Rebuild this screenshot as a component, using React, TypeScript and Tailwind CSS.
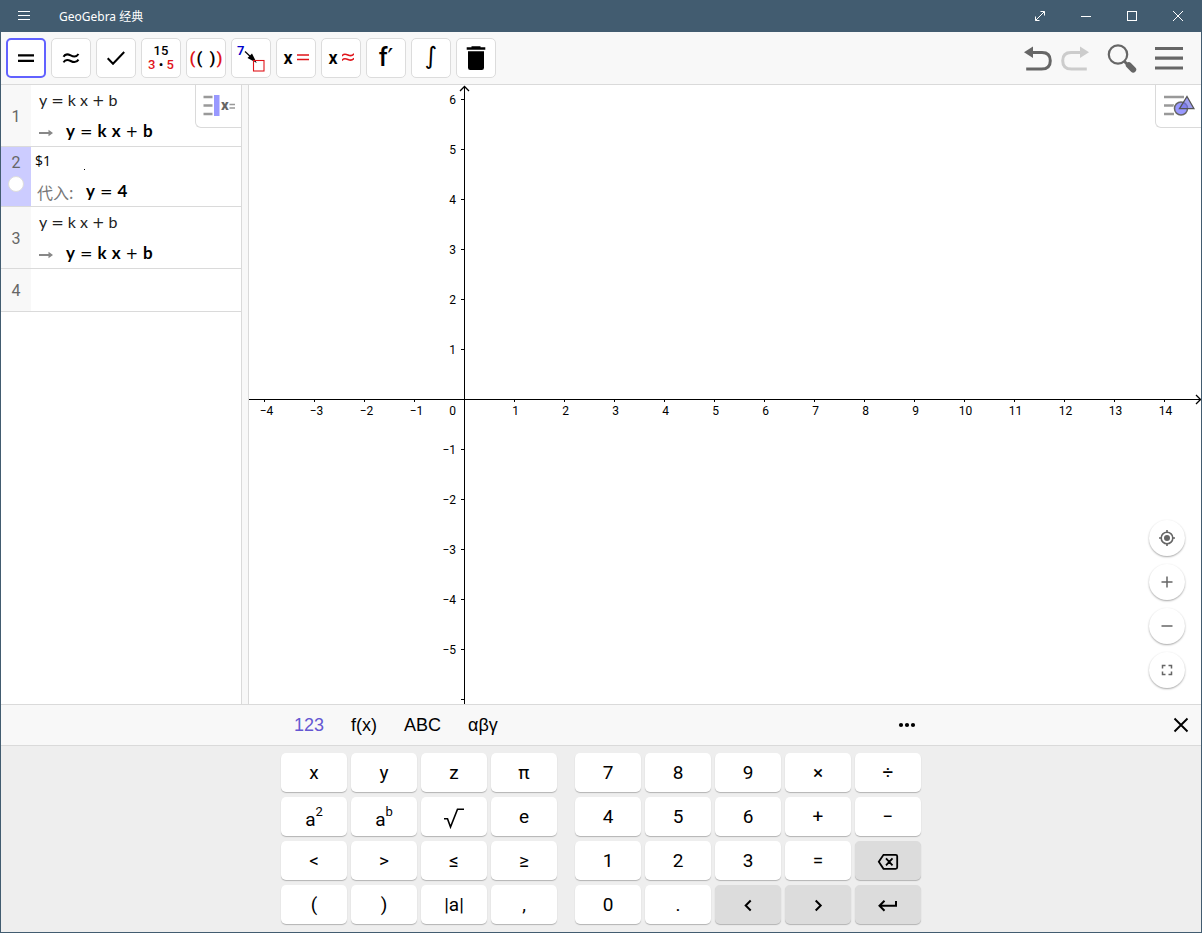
import { useState } from 'react';
import type { ReactNode } from 'react';

const UNIT = 50;
const ORIGIN = { x: 215, y: 314 };

const strip = 'flex items-center justify-center';

function EqualsIcon() {
  return (
    <svg className="w-9 h-9" viewBox="0 0 36 36" stroke="#000" strokeWidth="2.2">
      <path d="M10 15.4h16M10 20.8h16" />
    </svg>
  );
}

function ApproxIcon() {
  return (
    <svg className="w-9 h-9" viewBox="0 0 36 36" fill="none" stroke="#000" strokeWidth="2">
      <path d="M10.5 16.8c1.5-2.8 4-3 7.2-1.4s6 1.4 7.8-1.4M10.5 22.4c1.5-2.8 4-3 7.2-1.4s6 1.4 7.8-1.4" />
    </svg>
  );
}

function CheckIcon() {
  return (
    <svg className="w-9 h-9" viewBox="0 0 36 36" fill="none" stroke="#000" strokeWidth="2">
      <path d="M9.7 18.3l5.3 5.4L26.2 12" />
    </svg>
  );
}

function FactorIcon() {
  return (
    <span className="flex flex-col items-center text-[13px] leading-[14px] font-medium">
      <span>15</span>
      <span className="text-[#e0141a]">
        3 <span className="text-black">•</span> 5
      </span>
    </span>
  );
}

function ExpandIcon() {
  return (
    <span className="flex gap-px text-[17px] leading-5 font-semibold">
      <span className="text-[#e0141a]">(</span>
      <span>(</span>
      <span className="ml-[6px]">)</span>
      <span className="text-[#e0141a]">)</span>
    </span>
  );
}

function SubstituteIcon() {
  return (
    <svg className="w-9 h-9" viewBox="0 0 36 36">
      <text x="4" y="15" fontSize="13" fontWeight="600" fill="#0000cc">7</text>
      <path d="M12 11.500l7 6.500" stroke="#000" strokeWidth="1.200" />
      <path d="M14.500 18l4.500-4.500 4.700 9.500z" />
      <rect x="20.500" y="20.500" width="10.500" height="10.500" fill="none" stroke="#e0141a" strokeWidth="1.100" />
    </svg>
  );
}

function SolveIcon({ numeric = false }: { numeric?: boolean }) {
  return (
    <span className="flex items-center gap-1">
      <span className="text-[18px] leading-5 font-semibold">x</span>
      <svg className="w-3 h-3" viewBox="0 0 12 12" fill="none" stroke="#e0141a" strokeWidth="1.500">
        {numeric ? (
          <path d="M0 4c1.500-2.500 3.200-2.200 6-1s4.500 1 6-1.300M0 8.500c1.500-2.500 3.200-2.200 6-1s4.500 1 6-1.300" />
        ) : (
          <path d="M0 3h12M0 7.500h12" />
        )}
      </svg>
    </span>
  );
}

function TrashIcon() {
  return (
    <svg className="w-9 h-9" viewBox="0 0 36 36">
      <path d="M13.500 6.200h9v1h4.800v2.500H8.700V7.200h4.800zM10 11.200h16v16.600a2.200 2.200 0 0 1-2.200 2.200H12.200a2.200 2.200 0 0 1-2.200-2.200z" />
    </svg>
  );
}

const tools: { label: string; icon: ReactNode }[] = [
  { label: '精确计算', icon: <EqualsIcon /> },
  { label: '数值计算', icon: <ApproxIcon /> },
  { label: '保留输入', icon: <CheckIcon /> },
  { label: '因式分解', icon: <FactorIcon /> },
  { label: '展开', icon: <ExpandIcon /> },
  { label: '代入', icon: <SubstituteIcon /> },
  { label: '精确解', icon: <SolveIcon /> },
  { label: '数值解', icon: <SolveIcon numeric /> },
  {
    label: '导数',
    icon: (
      <span className="text-[25px] leading-6 font-medium">
        f<span className="font-['DejaVu_Sans',sans-serif]">′</span>
      </span>
    ),
  },
  {
    label: '积分',
    icon: <span className="font-['DejaVu_Sans',sans-serif] text-[24px] leading-6 -mt-1">∫</span>,
  },
  { label: '删除', icon: <TrashIcon /> },
];

function TitleBar() {
  return (
    <header className="h-8 bg-[#425c70] text-white flex items-center justify-between shrink-0">
      <div className="flex items-center">
        <button aria-label="菜单" className={`${strip} w-[46px] h-8`}>
          <svg className="w-3 h-3" viewBox="0 0 12 12" stroke="#fff" shapeRendering="crispEdges">
            <path d="M0 1.500h12M0 5.500h12M0 9.500h12" />
          </svg>
        </button>
        <h1 className="ml-3 pt-0.5 font-['Noto_Sans','Noto_Sans_CJK_SC',sans-serif] text-[12px] leading-4">
          GeoGebra 经典
        </h1>
      </div>
      <div className="flex">
        <button aria-label="全屏" className={`${strip} w-[46px] h-8`}>
          <svg className="w-3 h-3" viewBox="0 0 12 12" fill="none" stroke="#fff">
            <path d="M1.500 10.500l9-9M6.500 1.500h4v4M1.500 6.500v4h4" />
          </svg>
        </button>
        <button aria-label="最小化" className={`${strip} w-[46px] h-8`}>
          <svg className="w-[10px] h-[10px]" viewBox="0 0 10 10" stroke="#fff">
            <path d="M0 5.500h10" />
          </svg>
        </button>
        <button aria-label="最大化" className={`${strip} w-[46px] h-8`}>
          <svg className="w-[10px] h-[10px]" viewBox="0 0 10 10" fill="none" stroke="#fff">
            <rect x="0.500" y="0.500" width="9" height="9" />
          </svg>
        </button>
        <button aria-label="关闭" className={`${strip} w-[46px] h-8`}>
          <svg className="w-[10px] h-[10px]" viewBox="0 0 10 10" stroke="#fff">
            <path d="M0 0l10 10M10 0L0 10" />
          </svg>
        </button>
      </div>
    </header>
  );
}

function UndoIcon({ color, flip = false }: { color: string; flip?: boolean }) {
  return (
    <svg className="w-7 h-7" viewBox="0 0 28 28">
      <g transform={flip ? 'matrix(-1 0 0 1 28 0)' : undefined}>
        <path d="M0 8.300L9 2.500v11.500z" fill={color} />
        <path d="M8 8.500h10c5.500 0 8.300 3 8.300 8.200S23.500 25 17.500 25H2.200" fill="none" stroke={color} strokeWidth="3" />
      </g>
    </svg>
  );
}

function Toolbar() {
  const [active, setActive] = useState(0);

  return (
    <div className="h-[53px] bg-[#f8f8f8] border-b border-[#dadada] px-[5px] flex items-center justify-between shrink-0">
      <div className="flex gap-[5px]">
        {tools.map((tool, index) => (
          <button
            key={tool.label}
            aria-label={tool.label}
            onClick={() => setActive(index)}
            className={`${strip} w-10 h-10 bg-white rounded-[5px] overflow-hidden ${
              index === active ? 'border-2 border-[#6161ff]' : 'border border-[#dcdcdc]'
            }`}
          >
            {tool.icon}
          </button>
        ))}
      </div>
      <div className="flex items-center pr-[13px]">
        <button aria-label="撤销">
          <UndoIcon color="#666" />
        </button>
        <button aria-label="重做" className="ml-[9px]">
          <UndoIcon color="#ccc" flip />
        </button>
        <button aria-label="搜索" className="ml-[18px]">
          <svg className="w-[30px] h-[30px]" viewBox="0 0 30 30" fill="none" stroke="#666">
            <circle cx="11" cy="11.500" r="9.200" strokeWidth="2.200" />
            <path d="M17.500 18.500l4 4" strokeWidth="2.800" />
            <path d="M21.800 22.200l4.400 4.400" strokeWidth="6" strokeLinecap="round" />
          </svg>
        </button>
        <button aria-label="主菜单" className="ml-[18px]">
          <svg className="w-7 h-7" viewBox="0 0 28 28" stroke="#666" strokeWidth="3.200">
            <path d="M0 4.500h28M0 14.200h28M0 24h28" />
          </svg>
        </button>
      </div>
    </div>
  );
}

interface CasRow {
  id: number;
  input?: string;
  output?: string;
  note?: string;
  selected?: boolean;
}

const casRows: CasRow[] = [
  { id: 1, input: 'y = k x + b', output: 'y = k x + b' },
  { id: 2, input: '$1', output: 'y = 4', note: '代入:', selected: true },
  { id: 3, input: 'y = k x + b', output: 'y = k x + b' },
  { id: 4 },
];

// Operators are set in a wider face than the letters around them.
function Formula({ text, bold = false }: { text: string; bold?: boolean }) {
  return (
    <span
      className={`flex items-baseline font-['Lato',sans-serif] leading-6 ${
        bold ? 'gap-[5px] text-[17px] font-bold text-black' : 'gap-1 text-[16px] text-[#222]'
      }`}
    >
      {text.split(' ').map((part, i) => (
        <span
          key={i}
          className={/[=+]/.test(part) ? "font-['DejaVu_Sans',sans-serif] text-[15px] leading-6 font-normal" : ''}
        >
          {part}
        </span>
      ))}
    </span>
  );
}

function CasPanel() {
  return (
    <section className="relative w-[241px] shrink-0 border-r border-[#dadada] bg-white">
      {casRows.map((row) => (
        <div key={row.id} className="flex border-b border-[#dadada]">
          <div
            className={`w-[30px] shrink-0 flex flex-col items-center text-[16px] leading-5 text-[#666] ${
              row.selected ? 'bg-[#ccccff] pt-[6px]' : 'bg-[#f8f8f8] justify-center pt-0.5'
            }`}
          >
            {row.id}
            {row.selected && (
              <button aria-label="显示" className="w-4 h-4 mt-[3px] rounded-full bg-white border border-[#ddd]" />
            )}
          </div>
          {row.input ? (
            <div className={row.selected ? 'flex-1 pl-1 h-[59px]' : 'flex-1 pl-2 h-[61px]'}>
              <div className="h-[30px] flex items-center">
                {row.selected ? (
                  <span className="font-['Open_Sans',sans-serif] text-[14px] leading-5 pb-0.5">{row.input}</span>
                ) : (
                  <Formula text={row.input} />
                )}
                {row.selected && <span className="ml-[33px] mt-3.5 w-px h-px bg-black" />}
              </div>
              <div className={`flex items-center ${row.selected ? 'h-[29px]' : 'h-8'}`}>
                {row.note ? (
                  <span className="w-[51px] pl-0.5 font-['Noto_Sans_CJK_SC',sans-serif] text-[16px] leading-6 text-[#777]">
                    {row.note}
                  </span>
                ) : (
                  <svg className="w-[27px] h-2 mt-1" viewBox="0 0 27 8">
                    <path d="M0 3h9.500V0.800L14 4l-4.500 3.200V5H0z" fill="#888" />
                  </svg>
                )}
                <Formula text={row.output ?? ''} bold />
              </div>
            </div>
          ) : (
            <div className="flex-1 h-[42px]" />
          )}
        </div>
      ))}
      <button
        aria-label="运算区样式"
        className={`${strip} absolute top-0 right-0 w-[46px] h-[43px] bg-white border-l border-b border-[#dadada] rounded-bl-md`}
      >
        <svg className="w-8 h-6" viewBox="0 0 32 24">
          <path d="M0.500 3h9M0.500 11.500h9M0.500 20h9" stroke="#999" strokeWidth="2.600" />
          <rect x="11" y="1" width="5.500" height="21" fill="#9999ff" />
          <text x="18" y="16" fontSize="15" fontWeight="800" fill="#666">x</text>
          <path d="M26.500 10.500h5.500M26.500 14h5.500" stroke="#999" strokeWidth="1.400" />
        </svg>
      </button>
    </section>
  );
}

const xTicks = Array.from({ length: 19 }, (_, i) => i - 4);
const yTicks = Array.from({ length: 13 }, (_, i) => i - 6);

const tickLabel = (n: number) => (n < 0 ? `−${-n}` : `${n}`);

function Axes() {
  return (
    <svg className="absolute inset-0 w-full h-full" fontSize="12" shapeRendering="crispEdges">
      <g stroke="#000">
        <line x1="0" x2="100%" y1={ORIGIN.y + 0.5} y2={ORIGIN.y + 0.5} />
        <line x1={ORIGIN.x + 0.5} x2={ORIGIN.x + 0.5} y1="2" y2="100%" />
      </g>
      <path
        d={`M${ORIGIN.x - 4} 6l4.500-4.500 4.500 4.500`}
        fill="none"
        stroke="#000"
        strokeWidth="1.300"
        shapeRendering="auto"
      />
      <svg x="100%" y={ORIGIN.y} overflow="visible" shapeRendering="auto">
        <path d="M-5-4l4.500 4.500-4.500 4.500" fill="none" stroke="#000" strokeWidth="1.300" />
      </svg>
      {xTicks
        .filter((n) => n !== 0)
        .map((n) => {
          const x = ORIGIN.x + n * UNIT + 0.5;
          return (
            <g key={n}>
              <line x1={x} x2={x} y1={ORIGIN.y} y2={ORIGIN.y + 3} stroke="#000" />
              <text x={n < 0 ? x + 2 : x + 1} y={ORIGIN.y + 16} textAnchor="middle">
                {tickLabel(n)}
              </text>
            </g>
          );
        })}
      {yTicks
        .filter((n) => n !== 0)
        .map((n) => {
          const y = ORIGIN.y - n * UNIT + 0.5;
          return (
            <g key={n}>
              <line x1={ORIGIN.x - 3} x2={ORIGIN.x} y1={y} y2={y} stroke="#000" />
              {n > -6 && (
                <text x={ORIGIN.x - 8} y={y + 4} textAnchor="end">
                  {tickLabel(n)}
                </text>
              )}
            </g>
          );
        })}
      <text x={ORIGIN.x - 8} y={ORIGIN.y + 16} textAnchor="end">0</text>
    </svg>
  );
}

const zoomButtons: { label: string; icon: ReactNode }[] = [
  {
    label: '标准视图',
    icon: (
      <>
        <circle cx="9" cy="9" r="5.800" strokeWidth="1.600" />
        <circle cx="9" cy="9" r="3" fill="#666" stroke="none" />
        <path d="M9 1v3M9 14v3M1 9h3M14 9h3" strokeWidth="1.600" />
      </>
    ),
  },
  { label: '放大', icon: <path d="M3.500 9h11M9 3.500v11" strokeWidth="1.500" /> },
  { label: '缩小', icon: <path d="M3.500 9h11" strokeWidth="1.500" /> },
  {
    label: '全屏视图',
    icon: <path d="M4.500 7.500v-3h3M10.500 4.500h3v3M13.500 10.500v3h-3M7.500 13.500h-3v-3" strokeWidth="1.500" />,
  },
];

function GraphicsView() {
  return (
    <section className="relative flex-1 min-w-0 overflow-hidden bg-white">
      <Axes />
      <button
        aria-label="绘图区样式"
        className={`${strip} absolute top-0 right-0 w-[46px] h-[43px] bg-white border-l border-b border-[#dadada] rounded-bl-md`}
      >
        <svg className="w-8 h-6" viewBox="0 0 32 24">
          <path d="M1 3h20M1 11.500h10M1 20h10" stroke="#999" strokeWidth="2.400" />
          <circle cx="18" cy="14.500" r="8" fill="#fff" />
          <circle cx="18" cy="14.500" r="6.500" fill="#9999ff" stroke="#666" strokeWidth="1.500" />
          <path d="M24 2.500l7 12.200H16.500z" fill="#7575e8" fillOpacity="0.700" stroke="#555" strokeWidth="1.300" />
        </svg>
      </button>
      <div className="absolute right-4 bottom-4 flex flex-col gap-2">
        {zoomButtons.map((button) => (
          <button
            key={button.label}
            aria-label={button.label}
            className={`${strip} w-9 h-9 rounded-full bg-white shadow-[0_1px_2px_rgba(0,0,0,0.350)]`}
          >
            <svg className="w-[18px] h-[18px]" viewBox="0 0 18 18" fill="none" stroke="#666">
              {button.icon}
            </svg>
          </button>
        ))}
      </div>
    </section>
  );
}

interface KeyDef {
  label: string;
  face?: ReactNode;
  dark?: boolean;
}

const symbolKeys: KeyDef[] = [
  { label: 'x' },
  { label: 'y' },
  { label: 'z' },
  { label: 'π' },
  { label: 'a2', face: <Power exponent="2" /> },
  { label: 'ab', face: <Power exponent="b" /> },
  {
    label: '平方根',
    face: (
      <svg className="w-6 h-6" viewBox="0 0 24 24" fill="none" stroke="#000" strokeWidth="1.600">
        <path d="M2 13.800h3.500l3 8.200L15.500 4.200H22" />
      </svg>
    ),
  },
  { label: 'e' },
  { label: '<' },
  { label: '>' },
  { label: '≤' },
  { label: '≥' },
  { label: '(' },
  { label: ')' },
  { label: '|a|' },
  { label: ',' },
];

const numberKeys: KeyDef[] = [
  { label: '7' },
  { label: '8' },
  { label: '9' },
  { label: '×' },
  { label: '÷' },
  { label: '4' },
  { label: '5' },
  { label: '6' },
  { label: '+' },
  { label: '−' },
  { label: '1' },
  { label: '2' },
  { label: '3' },
  { label: '=' },
  {
    label: '退格',
    dark: true,
    face: (
      <svg className="w-6 h-6" viewBox="0 0 24 24" fill="none" stroke="#000" strokeWidth="1.800">
        <path d="M7.500 5.800h12.200a1.500 1.500 0 0 1 1.500 1.500v11a1.500 1.500 0 0 1-1.500 1.500H7.500L2.800 12.800zM10 9.300l6.500 7M16.500 9.300l-6.500 7" />
      </svg>
    ),
  },
  { label: '0' },
  { label: '.' },
  {
    label: '左移',
    dark: true,
    face: (
      <svg className="w-6 h-6" viewBox="0 0 24 24" fill="none" stroke="#000" strokeWidth="2">
        <path d="M14.700 7.500L9.700 12.500l5 5" />
      </svg>
    ),
  },
  {
    label: '右移',
    dark: true,
    face: (
      <svg className="w-6 h-6" viewBox="0 0 24 24" fill="none" stroke="#000" strokeWidth="2">
        <path d="M9.700 7.500l5 5-5 5" />
      </svg>
    ),
  },
  {
    label: '回车',
    dark: true,
    face: (
      <svg className="w-6 h-6" viewBox="0 0 24 24" fill="none" stroke="#000" strokeWidth="2">
        <path d="M20 8v4.800H4M8.500 7.800l-5 5 5 5" />
      </svg>
    ),
  },
];

function Power({ exponent }: { exponent: string }) {
  return (
    <span className="flex pt-1.5">
      a<span className="-mt-2 text-[13px] font-normal">{exponent}</span>
    </span>
  );
}

function KeyGrid({ keys, className }: { keys: KeyDef[]; className: string }) {
  return (
    <div className={`grid gap-x-1 gap-y-[5px] ${className}`}>
      {keys.map((key) => (
        <button
          key={key.label}
          aria-label={key.label}
          className={`${strip} h-[39px] rounded-[5px] text-[19px] leading-6 text-black shadow-[0_1px_1px_rgba(0,0,0,0.250)] ${
            key.dark ? 'bg-[#dcdcdc]' : 'bg-white'
          }`}
        >
          {key.face ?? key.label}
        </button>
      ))}
    </div>
  );
}

function Keyboard() {
  const [tab, setTab] = useState('123');

  return (
    <section className="shrink-0 bg-[#eeeeee]">
      <div className="relative h-[42px] bg-[#f8f8f8] border-y border-[#dadada] flex items-center justify-center">
        <div className="w-[640px] flex items-center justify-between">
          <div className="flex gap-px font-['Liberation_Sans',sans-serif] text-[18px]">
            {['123', 'f(x)', 'ABC', 'αβγ'].map((name) => (
              <button
                key={name}
                onClick={() => setTab(name)}
                className={`px-[13px] ${tab === name ? 'text-[#6557d2]' : 'text-black'}`}
              >
                {name}
              </button>
            ))}
          </div>
          <button aria-label="更多" className="mr-[5px]">
            <svg className="w-[18px] h-[18px]" viewBox="0 0 18 18">
              <circle cx="3" cy="9" r="2.100" />
              <circle cx="9" cy="9" r="2.100" />
              <circle cx="15" cy="9" r="2.100" />
            </svg>
          </button>
        </div>
        <button aria-label="关闭键盘" className="absolute right-3 top-3">
          <svg className="w-4 h-4" viewBox="0 0 16 16" stroke="#000" strokeWidth="1.900">
            <path d="M1.500 1.500l13 13M14.500 1.500l-13 13" />
          </svg>
        </button>
      </div>
      <div className="flex justify-center gap-[18px] pt-[7px] pb-2">
        <KeyGrid keys={symbolKeys} className="grid-cols-[repeat(4,66px)]" />
        <KeyGrid keys={numberKeys} className="grid-cols-[repeat(5,66px)]" />
      </div>
    </section>
  );
}

export default function App() {
  return (
    <div className="min-h-screen flex flex-col bg-white border border-t-0 border-[#425c70] font-['Roboto','Noto_Sans_CJK_SC',sans-serif]">
      <TitleBar />
      <Toolbar />
      <main className="flex-1 flex">
        <CasPanel />
        <div className="w-[7px] shrink-0 bg-[#f8f8f8] border-r border-[#dadada]" />
        <GraphicsView />
      </main>
      <Keyboard />
    </div>
  );
}
